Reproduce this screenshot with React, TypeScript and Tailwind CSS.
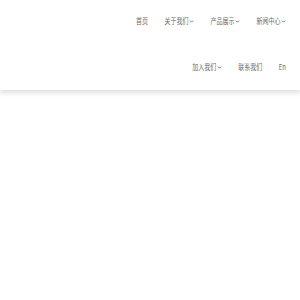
import { ChevronDown } from "lucide-react";

const items = [
  { label: "首页", drop: false },
  { label: "关于我们", drop: true },
  { label: "产品展示", drop: true },
  { label: "新闻中心", drop: true },
  { label: "加入我们", drop: true },
  { label: "联系我们", drop: false },
  { label: "En", drop: false },
];

export default function App() {
  return (
    <div className="min-h-[300px] w-[300px] bg-white font-['Noto_Sans_CJK_SC','Noto_Sans',sans-serif]">
      {/* header */}
      <header className="relative flex h-[90px] justify-end bg-white shadow-[0_3px_5px_rgba(0,0,0,0.13)]">
        <nav className="flex w-[180px] flex-wrap content-start justify-end gap-x-[16.5px] gap-y-1 pr-[14px]">
          {items.map((it) => (
            <a
              key={it.label}
              className="flex h-[42px] items-center text-[6px] leading-none text-[#6a6a6a]"
            >
              <span className="scale-y-[1.35]">{it.label}</span>
              {it.drop && <ChevronDown size={5} strokeWidth={4} className="ml-[0.5px] text-[#555]" />}
            </a>
          ))}
        </nav>
      </header>
    </div>
  );
}
